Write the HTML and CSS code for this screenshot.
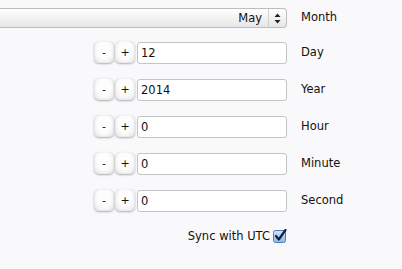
FILE: index.html
```html
<!DOCTYPE html>
<html>
<head>
<meta charset="utf-8">
<link rel="stylesheet" href="styles.css">
</head>
<body>
<div class="form">
  <div class="row row-month">
    <div class="ctrl">
      <div class="select">
        <span class="sel-val">May</span>
        <span class="sel-arrow">
          <svg width="7" height="11" viewBox="0 0 7 11"><path d="M3.5 0.5 L6.5 4 L0.5 4 Z M3.5 10.5 L6.5 7 L0.5 7 Z" fill="#222"/></svg>
        </span>
      </div>
    </div>
    <div class="label">Month</div>
  </div>
  <div class="row">
    <div class="ctrl"><span class="btn">-</span><span class="btn">+</span><span class="input">12</span></div>
    <div class="label">Day</div>
  </div>
  <div class="row">
    <div class="ctrl"><span class="btn">-</span><span class="btn">+</span><span class="input">2014</span></div>
    <div class="label">Year</div>
  </div>
  <div class="row">
    <div class="ctrl"><span class="btn">-</span><span class="btn">+</span><span class="input">0</span></div>
    <div class="label">Hour</div>
  </div>
  <div class="row">
    <div class="ctrl"><span class="btn">-</span><span class="btn">+</span><span class="input">0</span></div>
    <div class="label">Minute</div>
  </div>
  <div class="row">
    <div class="ctrl"><span class="btn">-</span><span class="btn">+</span><span class="input">0</span></div>
    <div class="label">Second</div>
  </div>
  <div class="row row-sync">
    <div class="ctrl">
      <span class="sync-text">Sync with UTC</span>
      <svg class="check" width="14" height="14" viewBox="0 0 14 14">
        <defs>
          <linearGradient id="cb" x1="0" y1="0" x2="0" y2="1">
            <stop offset="0" stop-color="#cfe3f7"/>
            <stop offset="1" stop-color="#8fb8e6"/>
          </linearGradient>
        </defs>
        <rect x="0.5" y="1.5" width="12" height="12" rx="2" fill="url(#cb)" stroke="#4d7fbf"/>
        <path d="M3 7 L5.8 10.5 L12.5 1" fill="none" stroke="#0e1f4a" stroke-width="2.2" stroke-linecap="round" stroke-linejoin="round"/>
      </svg>
    </div>
  </div>
</div>
</body>
</html>
```
FILE: styles.css
```css
html, body {
  margin: 0;
  padding: 0;
  background: #f9f9fb;
}
body {
  font-family: "DejaVu Sans", Verdana, sans-serif;
  font-size: 11.5px;
  color: #111;
}
.form {
  display: flex;
  flex-direction: column;
  padding-top: 8px;
  gap: 15px;
}
.row {
  display: flex;
  align-items: center;
  height: 22px;
}
.row-month {
  height: 20px;
  margin-bottom: -1px;
}
.ctrl {
  width: 287px;
  display: flex;
  justify-content: flex-end;
  align-items: center;
  flex: none;
}
.label {
  margin-left: 14px;
  margin-top: -2px;
}
.select {
  width: 100%;
  height: 20px;
  box-sizing: border-box;
  border: 1px solid #bdbdbd;
  border-left: none;
  border-radius: 0 4px 4px 0;
  background: linear-gradient(#ffffff, #e6e6e8);
  display: flex;
  justify-content: flex-end;
  align-items: center;
}
.sel-val {
  padding-right: 6px;
}
.sel-arrow {
  width: 17px;
  height: 18px;
  border-left: 1px solid #d0d0d0;
  display: flex;
  align-items: center;
  justify-content: center;
}
.btn {
  width: 20px;
  height: 22px;
  margin-right: 1px;
  margin-bottom: 2px;
  box-sizing: border-box;
  border-radius: 5px;
  background: radial-gradient(ellipse at 50% 40%, #fdfdfd 45%, #e4e4e6 100%);
  box-shadow: 0 1px 2px rgba(0,0,0,0.3), inset 0 0 2px rgba(0,0,0,0.12);
  display: flex;
  align-items: center;
  justify-content: center;
  font-size: 11px;
  color: #111;
}
.btn + .btn {
  margin-right: 2px;
}
.input {
  width: 150px;
  height: 22px;
  box-sizing: border-box;
  border: 1px solid #c4c4c4;
  border-radius: 3px;
  background: #fff;
  padding-left: 3px;
  display: flex;
  align-items: center;
}
.row-sync {
  height: 16px;
  margin-top: 1px;
}
.sync-text {
  margin-right: 3px;
  margin-top: -1px;
}
.check {
  display: block;
}
```
